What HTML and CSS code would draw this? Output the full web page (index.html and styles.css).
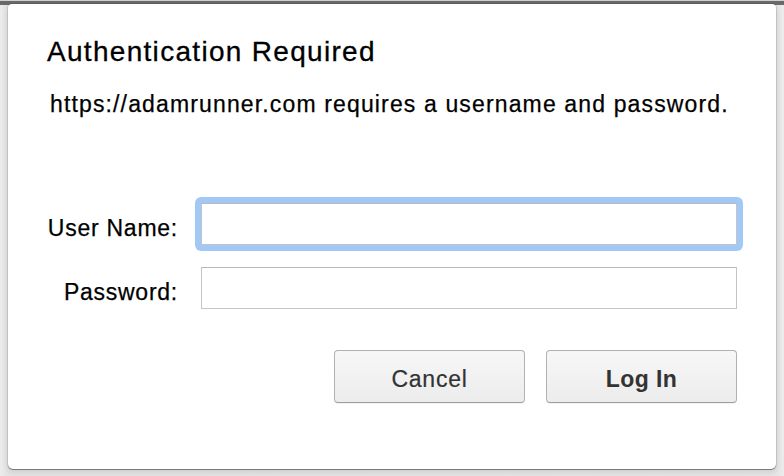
FILE: index.html
```html
<!DOCTYPE html>
<html>
<head>
<meta charset="utf-8">
<link rel="stylesheet" href="styles.css">
</head>
<body>
<div class="topbar"></div>
<div class="stage">
  <div class="dialog">
    <h1 class="title">Authentication Required</h1>
    <p class="message">https://adamrunner.com requires a username and password.</p>
    <div class="form">
      <label class="label label-first" for="user">User Name:</label>
      <div class="ring"><input class="field" id="user" type="text"></div>
      <label class="label" for="pass">Password:</label>
      <input class="field field-plain" id="pass" type="password">
    </div>
    <div class="actions">
      <button class="btn">Cancel</button>
      <button class="btn btn-default">Log In</button>
    </div>
  </div>
</div>
</body>
</html>
```

FILE: styles.css
```css
html, body {
  margin: 0;
  padding: 0;
}
body {
  width: 784px;
  height: 476px;
  overflow: hidden;
  background: linear-gradient(90deg, #ececec 0, #e2e2e2 8px, #e4e4e4 776px, #ececec 784px);
  font-family: "Liberation Sans", Arial, sans-serif;
  color: #000;
}
.topbar {
  height: 5px;
  background: linear-gradient(#d0d0d0 0 1px, #6a6a6a 1px 5px);
}
.stage {
  padding-left: 8px;
}
.dialog {
  box-sizing: border-box;
  width: 768px;
  height: 465px;
  margin-top: -1px;
  background: #fff;
  border-radius: 4px 4px 5px 5px;
  box-shadow: 0 0 0 1px rgba(0,0,0,0.10), 0 1px 0 rgba(0,0,0,0.35), 0 2px 6px rgba(0,0,0,0.12);
  padding: 32px 39px 0 39px;
  position: relative;
}
.title {
  margin: 0;
  font-size: 28px;
  line-height: 32px;
  font-weight: normal;
  letter-spacing: 1.3px;
  -webkit-text-stroke: 0.3px #000;
}
.message {
  margin: 22px 0 0 3px;
  font-size: 23px;
  line-height: 28px;
  letter-spacing: 1.14px;
  -webkit-text-stroke: 0.25px #000;
}
.form {
  display: grid;
  grid-template-columns: 131px 536px;
  column-gap: 23px;
  row-gap: 22px;
  align-items: center;
  margin-top: 85px;
}
.label {
  font-size: 23px;
  letter-spacing: 0.75px;
  text-align: right;
  padding-top: 8px;
  white-space: nowrap;
  -webkit-text-stroke: 0.25px #000;
}
.ring {
  margin: -6px;
  padding: 6px;
  border-radius: 6px;
  background: #a2c9f6;
}
.field {
  display: block;
  box-sizing: border-box;
  width: 536px;
  height: 42px;
  margin: 0;
  border: 1px solid #c4c4c4;
  border-top-color: #b9b9b9;
  background: #fff;
  outline: none;
  padding: 0 6px;
  font-size: 20px;
  font-family: "Liberation Sans", Arial, sans-serif;
}
.actions {
  display: flex;
  justify-content: flex-end;
  gap: 21px;
  margin-top: 41px;
}
.btn {
  box-sizing: border-box;
  width: 191px;
  height: 53px;
  border: 1px solid #b1b1b1;
  border-bottom-color: #9e9e9e;
  border-radius: 4px;
  background: linear-gradient(#f7f7f7, #ececec);
  box-shadow: 0 1px 0 rgba(0,0,0,0.05);
  font-family: "Liberation Sans", Arial, sans-serif;
  font-size: 23px;
  letter-spacing: 0.75px;
  color: #333;
  padding: 5px 0 0 0;
  -webkit-text-stroke: 0.2px #333;
}
.btn-default {
  font-weight: bold;
  letter-spacing: 0.4px;
  -webkit-text-stroke: 0;
}
```
